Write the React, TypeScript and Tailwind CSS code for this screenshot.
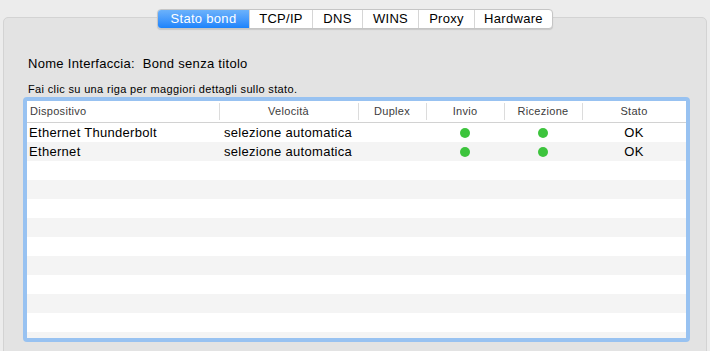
import React from 'react';

const tabs = [
  { label: 'Stato bond', w: 'w-[91px]' },
  { label: 'TCP/IP', w: 'w-[63px]' },
  { label: 'DNS', w: 'w-[50px]' },
  { label: 'WINS', w: 'w-[56px]' },
  { label: 'Proxy', w: 'w-[56px]' },
  { label: 'Hardware', w: 'w-[78px]' },
];

const columns = [
  { label: 'Dispositivo', w: 'w-[192px]', align: 'justify-start pl-[3px]' },
  { label: 'Velocità', w: 'w-[139px]', align: 'justify-center' },
  { label: 'Duplex', w: 'w-[68px]', align: 'justify-center' },
  { label: 'Invio', w: 'w-[78px]', align: 'justify-center' },
  { label: 'Ricezione', w: 'w-[78px]', align: 'justify-center' },
  { label: 'Stato', w: 'flex-1', align: 'justify-center' },
];

const devices = [
  { name: 'Ethernet Thunderbolt', speed: 'selezione automatica' },
  { name: 'Ethernet', speed: 'selezione automatica' },
];

function Dot() {
  return <span className="block w-[10px] h-[10px] rounded-full bg-[#3dc43d]" />;
}

export default function App() {
  const filler = Array.from({ length: 11 }, (_, i) => i + devices.length);

  return (
    <div className="w-[710px] h-[351px] bg-[#ececec] overflow-hidden font-['Liberation_Sans',Arial,sans-serif] text-black">
      {/* Tabs */}
      <div className="relative z-10 flex pt-[9px] pl-[157px]">
        <div className="flex h-[20px] rounded-[4px] border border-[#c5c5c5] bg-white shadow-[0_1px_1px_rgba(0,0,0,0.12)] overflow-hidden text-[13px] tracking-[0.3px]">
          {tabs.map((t, i) => (
            <div
              key={t.label}
              className={
                i === 0
                  ? `${t.w} flex items-center justify-center text-white bg-gradient-to-b from-[#6bb2fb] to-[#1b83fb]`
                  : `${t.w} flex items-center justify-center border-l border-[#d6d6d6]`
              }
            >
              {t.label}
            </div>
          ))}
        </div>
      </div>

      {/* Group box */}
      <div className="-mt-[12px] mx-[3px] h-[400px] rounded-t-[5px] border border-[#d3d3d3] bg-[#e3e3e3] pt-[38px] pl-[24px] pr-[16px]">
        <div className="text-[13px] leading-[16px] tracking-[0.3px]">Nome Interfaccia:&nbsp; Bond senza titolo</div>
        <div className="mt-[11px] text-[11px] leading-[13px] tracking-[0.35px]">Fai clic su una riga per maggiori dettagli sullo stato.</div>

        <div className="-ml-[5px] mt-[1px] w-[667px] h-[245px] rounded-[4px] border-4 border-[#98c2f1] bg-white overflow-hidden">
          <div className="flex h-[22px] border-b border-[#d2d2d2] text-[11px] tracking-[0.3px] text-[#3c3c3c]">
            {columns.map((c, i) => (
              <div key={c.label} className={`${c.w} flex items-center ${c.align} relative`}>
                {i > 0 && <span className="absolute left-0 top-[2px] bottom-[2px] w-px bg-[#dcdcdc]" />}
                {c.label}
              </div>
            ))}
          </div>

          {devices.map((d, i) => (
            <div key={d.name} className={`flex h-[19px] items-center text-[13px] tracking-[0.3px] ${i % 2 ? 'bg-[#f4f4f4]' : 'bg-white'}`}>
              <div className="w-[192px] pl-[2px]">{d.name}</div>
              <div className="w-[139px] pl-[5px]">{d.speed}</div>
              <div className="w-[68px]" />
              <div className="w-[78px] flex justify-center"><Dot /></div>
              <div className="w-[78px] flex justify-center"><Dot /></div>
              <div className="flex-1 text-center">OK</div>
            </div>
          ))}

          {filler.map((i) => (
            <div key={i} className={`h-[19px] ${i % 2 ? 'bg-[#f4f4f4]' : 'bg-white'}`} />
          ))}
        </div>
      </div>
    </div>
  );
}
